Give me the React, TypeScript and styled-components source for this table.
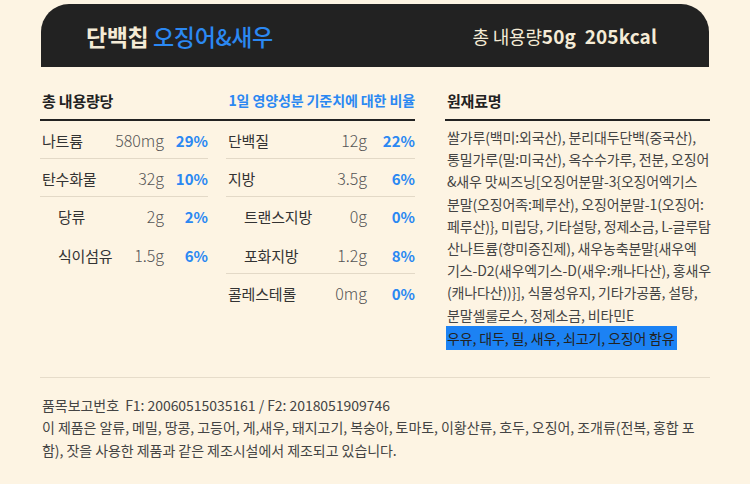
import * as React from 'react';
import styled, { createGlobalStyle } from 'styled-components';

const KR = `"Noto Sans CJK KR", "Noto Sans", sans-serif`;
const BLUE = '#2b88f2';

const GlobalStyle = createGlobalStyle`
html, body {
    margin: 0;
    padding: 0;
    background: #fdf4e3;
}
body {
    font-family: ${KR};
    color: #333;
}
`;

type TRow = {
    label: string;
    value: string;
    percent: string;
    sub?: boolean;
    line?: boolean;
};

const LEFT_ROWS: TRow[] = [
    { label: '나트륨', value: '580mg', percent: '29%', line: true },
    { label: '탄수화물', value: '32g', percent: '10%', line: true },
    { label: '당류', value: '2g', percent: '2%', sub: true },
    { label: '식이섬유', value: '1.5g', percent: '6%', sub: true },
];

const RIGHT_ROWS: TRow[] = [
    { label: '단백질', value: '12g', percent: '22%', line: true },
    { label: '지방', value: '3.5g', percent: '6%', line: true },
    { label: '트랜스지방', value: '0g', percent: '0%', sub: true },
    { label: '포화지방', value: '1.2g', percent: '8%', sub: true, line: true },
    { label: '콜레스테롤', value: '0mg', percent: '0%' },
];

const INGREDIENTS = [
    '쌀가루(백미:외국산), 분리대두단백(중국산),',
    '통밀가루(밀:미국산), 옥수수가루, 전분, 오징어',
    '&새우 맛씨즈닝[오징어분말-3{오징어엑기스',
    '분말(오징어족:페루산), 오징어분말-1(오징어:',
    '페루산)}, 미립당, 기타설탕, 정제소금, L-글루탐',
    '산나트륨(향미증진제), 새우농축분말{새우엑',
    '기스-D2(새우엑기스-D(새우:캐나다산), 홍새우',
    '(캐나다산))}], 식물성유지, 기타가공품, 설탕,',
    '분말셀룰로스, 정제소금, 비타민E',
];

const Page = styled.div`
width: 670px;
padding: 4px 40px 0 40px;
`;

const TopBar = styled.header`
display: flex;
align-items: center;
justify-content: space-between;
height: 63px;
margin: 0 1px;
padding: 0 52px 0 45px;
background: #222;
border-radius: 28px 28px 0 0;
`;

const Title = styled.h1`
margin: 0;
font-size: 23px;
font-weight: 700;
letter-spacing: -0.4px;
color: #f4ebd6;
span {
    font-weight: 500;
    color: ${BLUE};
}
`;

const Amount = styled.div`
font-size: 18px;
color: #f4ebd6;
letter-spacing: -0.2px;
b {
    font-size: 19px;
    font-weight: 700;
    white-space: pre;
    letter-spacing: 0.1px;
}
`;

const Body = styled.main`
display: grid;
grid-template-columns: 375px 265px;
column-gap: 30px;
margin-top: 22px;
padding-bottom: 27px;
border-bottom: 1px solid #e6dcca;
`;

const SectionHead = styled.div`
display: flex;
align-items: center;
justify-content: space-between;
height: 22px;
padding: 0 0 8px 2px;
border-bottom: 2px solid #222;
`;

const HeadTitle = styled.h2`
margin: 0;
font-size: 15px;
font-weight: 700;
color: #222;
letter-spacing: -0.2px;
`;

const HeadNote = styled.span`
font-size: 14px;
font-weight: 700;
color: ${BLUE};
letter-spacing: -0.1px;
`;

const Columns = styled.div`
display: grid;
grid-template-columns: 168px 189px;
column-gap: 18px;
align-items: start;
`;

const Row = styled.div<{ sub?: boolean; line?: boolean }>`
display: flex;
align-items: center;
height: 20px;
padding: 9px 0 ${p => (p.line ? 8 : 10)}px ${p => (p.sub ? 18 : 2)}px;
border-bottom: ${p => (p.line ? '1px solid #e3d9c7' : 'none')};
`;

const Label = styled.span`
flex: 1;
font-size: 15px;
color: #333;
letter-spacing: -0.2px;
white-space: nowrap;
`;

const Value = styled.span`
font-size: 16px;
font-weight: 300;
color: #555;
`;

const Percent = styled.span<{ w: number }>`
width: ${p => p.w}px;
text-align: right;
font-size: 15px;
font-weight: 700;
color: ${BLUE};
`;

const Ingredients = styled.div`
padding: 5px 0 0 2px;
font-size: 14px;
line-height: 22.2px;
color: #444;
letter-spacing: -0.15px;
white-space: nowrap;
`;

const Allergy = styled.span`
display: inline-block;
margin-left: -1px;
padding: 0 2px 0 1px;
line-height: 24px;
background: #1c82f4;
color: #222;
`;

const Footer = styled.footer`
padding: 16px 0 0 2px;
font-size: 14px;
line-height: 22.5px;
color: #444;
letter-spacing: -0.05px;
white-space: pre;
`;

const NutriColumn: React.FC<{ rows: TRow[]; pw: number }> = ({ rows, pw }) => (
    <div>
        {rows.map(r => (
            <Row key={r.label} sub={r.sub} line={r.line}>
                <Label>{r.label}</Label>
                <Value>{r.value}</Value>
                <Percent w={pw}>{r.percent}</Percent>
            </Row>
        ))}
    </div>
);

const App: React.FC = () => {
    return (<>
        <GlobalStyle />
        <Page>
            <TopBar>
                <Title>단백칩 <span>오징어&새우</span></Title>
                <Amount>총 내용량<b>50g  205kcal</b></Amount>
            </TopBar>
            <Body>
                <section>
                    <SectionHead>
                        <HeadTitle>총 내용량당</HeadTitle>
                        <HeadNote>1일 영양성분 기준치에 대한 비율</HeadNote>
                    </SectionHead>
                    <Columns>
                        <NutriColumn rows={LEFT_ROWS} pw={44} />
                        <NutriColumn rows={RIGHT_ROWS} pw={48} />
                    </Columns>
                </section>
                <section>
                    <SectionHead>
                        <HeadTitle>원재료명</HeadTitle>
                    </SectionHead>
                    <Ingredients>
                        {INGREDIENTS.map(l => <div key={l}>{l}</div>)}
                        <Allergy>우유, 대두, 밀, 새우, 쇠고기, 오징어 함유</Allergy>
                    </Ingredients>
                </section>
            </Body>
            <Footer>
                {'품목보고번호  F1: 20060515035161 / F2: 2018051909746\n'}
                {'이 제품은 알류, 메밀, 땅콩, 고등어, 게,새우, 돼지고기, 복숭아, 토마토, 이황산류, 호두, 오징어, 조개류(전복, 홍합 포\n'}
                {'함), 잣을 사용한 제품과 같은 제조시설에서 제조되고 있습니다.'}
            </Footer>
        </Page>
    </>)
}
export default App
